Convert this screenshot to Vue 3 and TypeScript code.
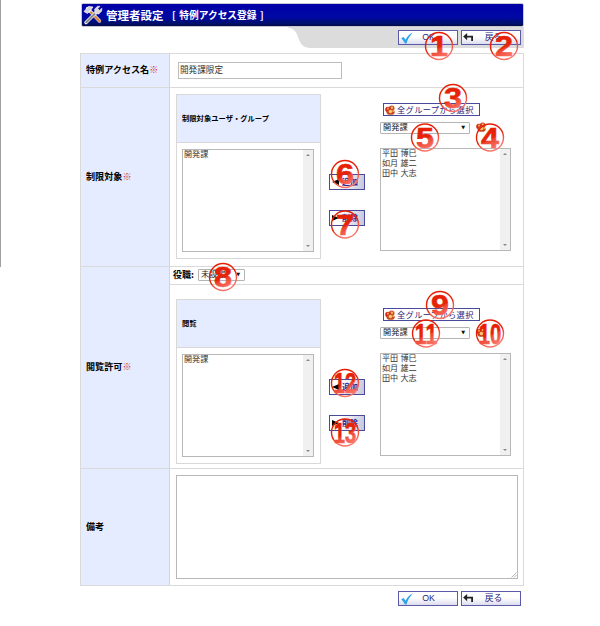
<script setup lang="ts">
interface Panel {
  id: string
  heading: string
  selected: string[]
  members: string[]
}

interface Marker {
  n: number
  x: number
  y: number
}

const members: string[] = ['平田 博巳', '如月 雄二', '田中 大志']

const restrict: Panel = { id: 'restrict', heading: '制限対象ユーザ・グループ', selected: ['開発課'], members }
const view: Panel = { id: 'view', heading: '閲覧', selected: ['開発課'], members }

const rows = [
  { label: '制限対象', panel: restrict, role: false },
  { label: '閲覧許可', panel: view, role: true },
]

const markers: Marker[] = [
  { n: 1, x: 439, y: 46 },
  { n: 2, x: 504, y: 46 },
  { n: 3, x: 453, y: 98 },
  { n: 4, x: 490, y: 137.5 },
  { n: 5, x: 425, y: 137.5 },
  { n: 6, x: 345, y: 174 },
  { n: 7, x: 345, y: 224.5 },
  { n: 8, x: 223, y: 277 },
  { n: 9, x: 440, y: 305 },
  { n: 10, x: 490, y: 333.5 },
  { n: 11, x: 426, y: 333.5 },
  { n: 12, x: 345, y: 383 },
  { n: 13, x: 345, y: 432.5 },
]
</script>

<template>
  <div class="page">
    <svg class="defs" width="0" height="0">
      <defs>
        <symbol id="people" viewBox="0 0 10 10">
          <ellipse cx="6.7" cy="3.2" rx="2.8" ry="2.6" fill="#c8502c" />
          <circle cx="6.9" cy="2.700" r="1.2" fill="#f3b65c" />
          <ellipse cx="3" cy="4.4" rx="2.8" ry="2.6" fill="#d8291c" />
          <circle cx="3" cy="3.7" r="1.1" fill="#f7a050" />
          <ellipse cx="5.6" cy="7.2" rx="4" ry="2.6" fill="#c8481c" />
          <circle cx="5.4" cy="6.5" r="1.7" fill="#fbc878" />
          <circle cx="8.2" cy="6.2" r="1.1" fill="#f0a040" />
        </symbol>
        <symbol id="check" viewBox="0 0 12 12">
          <path d="M.3 6.200 2.600 4.900 4.600 7.700C6 4.400 8.400 2 11.700 .5 8.900 3.600 6.700 7 5.500 11.500H4C3 9.500 1.800 7.700.3 6.200Z" fill="#2ba4e8" />
        </symbol>
        <symbol id="back" viewBox="0 0 12 10">
          <path d="M0 4 4.500 0V3H11V9H9V5H4.500V8Z" fill="#222" />
        </symbol>
      </defs>
    </svg>
    <div class="edge"></div>

    <main class="content">
      <header class="title">
        <svg class="tools" viewBox="0 0 20 20">
          <path d="M4.500 3.500 16.500 16" stroke="#e8e8f0" stroke-width="3.400" stroke-linecap="round" />
          <path d="M8 7.500 16.700 16.300" stroke="#d8863c" stroke-width="2.400" stroke-linecap="round" />
          <path d="M1 6.500 5.500 1.500 10 2 7.500 5.500 4.500 8.500Z" fill="#d4d4d8" stroke="#fff" stroke-width=".7" />
          <path d="M3 17.500 13.500 7" stroke="#fff" stroke-width="3.400" stroke-linecap="round" />
          <path d="M3.300 17.200 12.500 8" stroke="#8a8a8e" stroke-width="2.200" stroke-linecap="round" />
          <path d="M12 8.500 11.600 4 14.500 1.300 17 1.200 14.800 3.800 16.300 5.300 19 3.200 18.600 6.300 15.800 9Z" fill="#d8d8dc" stroke="#fff" stroke-width=".5" />
        </svg>
        <h1>管理者設定</h1>
        <span class="sub">[ 特例アクセス登録 ]</span>
      </header>

      <div class="toolbar">
        <svg class="tab" viewBox="0 0 236 21" preserveAspectRatio="none">
          <path d="M0 0H236V21H22C13 20.500 12 15 9.500 8.500 8 4.500 5 1 0 .8Z" fill="#dcdcdc" />
        </svg>
        <button class="btn"><svg class="ic"><use href="#check" /></svg><span>OK</span></button>
        <button class="btn return"><svg class="ic back"><use href="#back" /></svg><span>戻る</span></button>
      </div>

      <section class="table">
        <div class="row name">
          <div class="label">特例アクセス名<i>※</i></div>
          <div class="cell"><div class="input">開発課限定</div></div>
        </div>

        <div v-for="r in rows" :key="r.panel.id" class="row" :class="r.panel.id">
          <div class="label">{{ r.label }}<i>※</i></div>
          <div class="cell">
            <div v-if="r.role" class="role">
              <b>役職:</b>
              <div class="select small"><span>未設定</span><em>▼</em></div>
            </div>
            <div class="picker">
              <div class="box">
                <div class="head">{{ r.panel.heading }}</div>
                <div class="list">
                  <ul><li v-for="s in r.panel.selected" :key="s">{{ s }}</li></ul>
                  <div class="scroll"><u class="up"></u><u class="down"></u></div>
                </div>
              </div>
              <div class="moves">
                <button class="move"><svg viewBox="0 0 8 6"><path d="M0 3 7 0V6Z" /></svg><span>追加</span></button>
                <button class="move"><svg viewBox="0 0 8 6"><path d="M7 3 0 0V6Z" /></svg><span>削除</span></button>
              </div>
              <div class="source">
                <button class="all"><svg><use href="#people" /></svg><span>全グループから選択</span></button>
                <div class="group">
                  <div class="select"><span>開発課</span><em>▼</em></div>
                  <svg class="pick"><use href="#people" /></svg>
                </div>
                <div class="list">
                  <ul><li v-for="m in r.panel.members" :key="m">{{ m }}</li></ul>
                  <div class="scroll"><u class="up"></u><u class="down"></u></div>
                </div>
              </div>
            </div>
          </div>
        </div>

        <div class="row note">
          <div class="label">備考</div>
          <div class="cell">
            <div class="area">
              <svg viewBox="0 0 6 6"><path d="M.5 5.500 5.500 .5M3 5.500 5.500 3" stroke="#999" stroke-width=".7" /></svg>
            </div>
          </div>
        </div>
      </section>

      <footer class="bottom">
        <button class="btn"><svg class="ic"><use href="#check" /></svg><span>OK</span></button>
        <button class="btn return"><svg class="ic back"><use href="#back" /></svg><span>戻る</span></button>
      </footer>
    </main>

    <svg class="markers" viewBox="0 0 600 626">
      <defs>
        <linearGradient id="red" gradientUnits="userSpaceOnUse" x1="-5" y1="-10" x2="5" y2="11">
          <stop offset="0" stop-color="#e61e05" />
          <stop offset=".52" stop-color="#e62408" />
          <stop offset=".6" stop-color="#ee4632" />
          <stop offset="1" stop-color="#f97568" />
        </linearGradient>
      </defs>
      <g v-for="m in markers" :key="m.n" :transform="`translate(${m.x} ${m.y})`" fill="url(#red)">
        <circle r="13.500" class="ring" stroke="url(#red)" />
        <text
          y="10.300"
          text-anchor="middle"
          stroke="url(#red)"
          :textLength="m.n > 9 ? 22.5 : 18"
          lengthAdjust="spacingAndGlyphs"
        >{{ m.n }}</text>
      </g>
    </svg>
  </div>
</template>

<style>
body {
  background: #fff;
}
</style>

<style scoped>
* {
  box-sizing: border-box;
}
.page {
  position: relative;
  width: 600px;
  height: 626px;
  overflow: hidden;
  font-family: "Liberation Sans", "Noto Sans CJK JP", sans-serif;
  color: #333;
}
.defs,
.edge,
.markers {
  position: absolute;
  left: 0;
  top: 0;
}
.edge {
  width: 1px;
  height: 267px;
  background: #a0a0a0;
}
.markers {
  width: 600px;
  height: 626px;
}
.markers text {
  font: bold 29px "Liberation Sans", sans-serif;
  stroke-width: 0.6;
}
.ring {
  fill: none;
  stroke-width: 1.4;
}
.content {
  width: 444px;
  margin-left: 80px;
  padding-top: 3px;
}
.title {
  display: flex;
  align-items: center;
  height: 24px;
  margin-left: 1px;
  padding-left: 1px;
  border: 1px solid #c8c8d0;
  border-radius: 2px;
  background: linear-gradient(#0000a6, #0008a4 60%, #00106c 88%, #000b48);
  color: #fff;
  white-space: nowrap;
  font-family: "Noto Sans CJK JP", sans-serif;
}
.tools {
  width: 20px;
  height: 20px;
  fill: none;
}
h1 {
  margin: 0 0 0 3px;
  width: 66px;
  font-size: 11.500px;
  line-height: 22px;
}
.sub {
  font-size: 9.700px;
  font-weight: bold;
  line-height: 22px;
  word-spacing: 1.5px;
}
.toolbar {
  position: relative;
  display: flex;
  justify-content: flex-end;
  gap: 3px;
  height: 21px;
  padding: 3px 3px 0 0;
}
.tab {
  position: absolute;
  right: 0;
  top: 0;
  width: 236px;
  height: 21px;
}
.btn {
  position: relative;
  display: flex;
  align-items: center;
  width: 60px;
  height: 15px;
  margin: 0;
  padding: 0 14px 0 2px;
  border: 1px solid #5a5aa8;
  background: linear-gradient(#fff 45%, #dcdcee);
  color: #26267c;
  font: 8.800px/13px "Liberation Sans", "Noto Sans CJK JP", sans-serif;
}
.btn.return {
  padding-right: 8px;
}
.btn span {
  flex: 1;
  padding-left: 1px;
  text-align: center;
  white-space: nowrap;
}
.ic {
  width: 12px;
  height: 12px;
  flex: none;
}
.ic.back {
  width: 11px;
  height: 9px;
  margin-left: -1px;
}
.table {
  margin-top: 5px;
  border: 1px solid #dadada;
}
.row {
  display: flex;
  border-bottom: 1px solid #dadada;
}
.name {
  height: 34px;
}
.restrict {
  height: 179px;
}
.view {
  height: 202px;
}
.note {
  height: 116px;
  border-bottom: 0;
}
.label {
  display: flex;
  align-items: center;
  width: 89px;
  padding: 0 0 3px 5px;
  border-right: 1px solid #d2d4da;
  background: #e5ecff;
  color: #000;
  font: bold 9.100px/14px "Noto Sans CJK JP", sans-serif;
  white-space: nowrap;
}
.label i {
  color: #d03030;
  font-style: normal;
  font-weight: 500;
}
.cell {
  flex: 1;
  min-width: 0;
}
.input {
  width: 164px;
  height: 17px;
  margin: 8px 0 0 8px;
  padding-left: 1px;
  border: 1px solid #bcbcbc;
  font-size: 8.600px;
  line-height: 15px;
}
.role {
  display: flex;
  height: 18px;
  padding: 2px 0 0 3px;
  border-bottom: 1px solid #dadada;
}
.role b {
  width: 25px;
  color: #000;
  font: bold 9px/11px "Noto Sans CJK JP", sans-serif;
}
.picker {
  display: flex;
  padding: 6px 0 0 6px;
}
.role + .picker {
  padding-top: 14px;
}
.box {
  width: 145px;
  height: 165px;
  border: 1px solid #d8d8d8;
}
.head {
  height: 48px;
  padding-left: 5px;
  border-bottom: 1px solid #d8d8d8;
  background: #e5ecff;
  color: #000;
  font: bold 7.300px/46px "Noto Sans CJK JP", sans-serif;
  white-space: nowrap;
}
.box .list {
  width: 132px;
  margin: 6px 0 0 5px;
}
.list {
  display: flex;
  width: 131px;
  height: 103px;
  border: 1px solid #b8b8b8;
}
ul {
  flex: 1;
  margin: 0;
  padding: 0 0 0 1px;
  list-style: none;
  color: #333;
  font-size: 8.100px;
  line-height: 10px;
}
.scroll {
  display: flex;
  flex-direction: column;
  align-items: center;
  justify-content: space-between;
  width: 10px;
  padding: 4px 0;
  background: #f0f0f0;
}
.scroll u {
  border: 2px solid transparent;
}
.scroll .up {
  border-top: 0;
  border-bottom-color: #888;
}
.scroll .down {
  border-bottom: 0;
  border-top-color: #888;
}
.moves {
  display: flex;
  flex-direction: column;
  gap: 20px;
  padding: 80px 0 0 8px;
}
.move {
  display: flex;
  align-items: center;
  gap: 2px;
  width: 36px;
  height: 16px;
  margin: 0;
  padding: 0 0 0 2px;
  border: 1px solid #4a4a9c;
  background: linear-gradient(100deg, #fff 30%, #c4c6dc);
  color: #2a2a9c;
  font: bold 8px/12px "Noto Sans CJK JP", sans-serif;
  white-space: nowrap;
}
.move svg {
  width: 8px;
  height: 6px;
  flex: none;
  fill: #000;
}
.source {
  padding: 9px 0 0 15px;
}
.all {
  display: flex;
  align-items: center;
  gap: 2px;
  width: 97px;
  height: 13px;
  margin: 0 0 0 3px;
  padding: 0 0 0 1px;
  border: 1px solid #4a4a9c;
  background: #fff;
  color: #24247c;
  font: 8.200px/11px "Noto Sans CJK JP", sans-serif;
  letter-spacing: 0.4px;
  white-space: nowrap;
}
.all svg,
.pick {
  width: 10px;
  height: 10px;
  flex: none;
}
.group {
  display: flex;
  gap: 6px;
  margin: 6px 0 14px;
}
.select {
  display: flex;
  justify-content: space-between;
  width: 90px;
  height: 12px;
  padding: 0 4px 0 2px;
  border: 1px solid #b4b4b4;
  border-radius: 1px;
  color: #222;
  font-size: 8.200px;
  line-height: 10px;
  white-space: nowrap;
}
.select em {
  font: normal 5px/9px "DejaVu Sans", sans-serif;
  color: #111;
}
.select.small {
  width: 47px;
  padding-right: 4px;
}
.area {
  display: flex;
  align-items: flex-end;
  justify-content: flex-end;
  width: 342px;
  height: 104px;
  margin: 6px 0 0 6px;
  border: 1px solid #b8b8b8;
}
.area svg {
  width: 6px;
  height: 6px;
}
.bottom {
  display: flex;
  justify-content: flex-end;
  gap: 3px;
  padding: 5px 3px 0 0;
}
</style>
